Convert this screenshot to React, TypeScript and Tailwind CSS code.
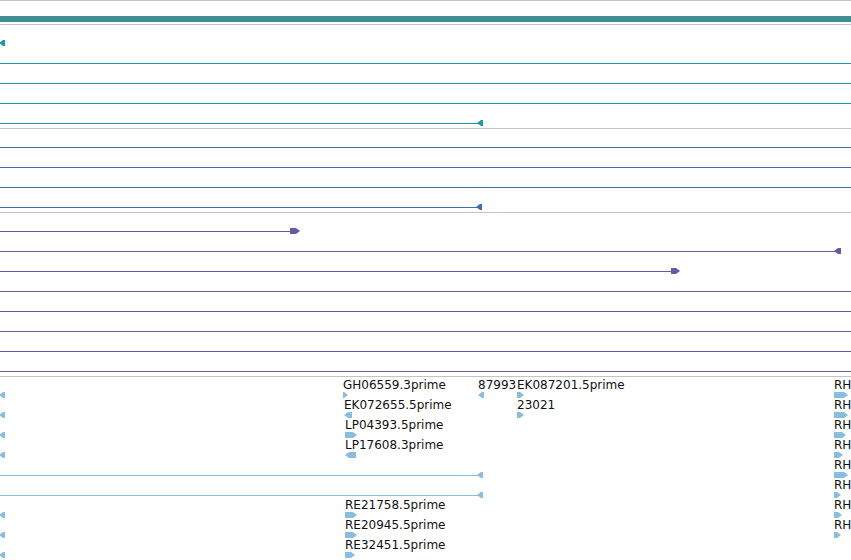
type Dir = "l" | "r";

type Glyph = { x: number; w: number; dir: Dir; label?: string };

type Row = { line?: number; glyphs?: Glyph[] };

type Track = { color: string; rows: Row[] };

const FULL = 851;

const full: Row = { line: FULL };

const tracks: Track[] = [
  {
    color: "#2096a8",
    rows: [
      { glyphs: [{ x: -1, w: 6, dir: "l" }] },
      full,
      full,
      full,
      { line: 480, glyphs: [{ x: 477, w: 6, dir: "l" }] },
    ],
  },
  {
    color: "#3d6db5",
    rows: [full, full, full, { line: 479, glyphs: [{ x: 476, w: 6, dir: "l" }] }],
  },
  {
    color: "#6a58a6",
    rows: [
      { line: 292, glyphs: [{ x: 290, w: 10, dir: "r" }] },
      { line: 836, glyphs: [{ x: 834, w: 7, dir: "l" }] },
      { line: 673, glyphs: [{ x: 671, w: 9, dir: "r" }] },
      full,
      full,
      full,
      full,
      full,
    ],
  },
  {
    color: "#88bde0",
    rows: [
      {
        glyphs: [
          { x: -1, w: 6, dir: "l" },
          { x: 343, w: 5, dir: "r", label: "GH06559.3prime" },
          { x: 478, w: 6, dir: "l", label: "87993" },
          { x: 517, w: 7, dir: "r", label: "EK087201.5prime" },
          { x: 834, w: 14, dir: "r", label: "RH" },
        ],
      },
      {
        glyphs: [
          { x: -1, w: 6, dir: "l" },
          { x: 344, w: 8, dir: "l", label: "EK072655.5prime" },
          { x: 517, w: 7, dir: "r", label: "23021" },
          { x: 834, w: 14, dir: "r", label: "RH" },
        ],
      },
      {
        glyphs: [
          { x: -1, w: 6, dir: "l" },
          { x: 345, w: 12, dir: "r", label: "LP04393.5prime" },
          { x: 834, w: 12, dir: "r", label: "RH" },
        ],
      },
      {
        glyphs: [
          { x: -1, w: 6, dir: "l" },
          { x: 345, w: 11, dir: "l", label: "LP17608.3prime" },
          { x: 834, w: 9, dir: "r", label: "RH" },
        ],
      },
      {
        line: 480,
        glyphs: [
          { x: 477, w: 6, dir: "l" },
          { x: 834, w: 14, dir: "r", label: "RH" },
        ],
      },
      {
        line: 480,
        glyphs: [
          { x: 477, w: 6, dir: "l" },
          { x: 834, w: 7, dir: "r", label: "RH" },
        ],
      },
      {
        glyphs: [
          { x: -1, w: 6, dir: "l" },
          { x: 345, w: 12, dir: "r", label: "RE21758.5prime" },
          { x: 834, w: 8, dir: "r", label: "RH" },
        ],
      },
      {
        glyphs: [
          { x: -1, w: 6, dir: "l" },
          { x: 345, w: 12, dir: "r", label: "RE20945.5prime" },
          { x: 834, w: 7, dir: "r", label: "RH" },
        ],
      },
      {
        glyphs: [
          { x: -1, w: 6, dir: "l" },
          { x: 345, w: 10, dir: "r", label: "RE32451.5prime" },
        ],
      },
    ],
  },
];

// body at full height, then a tapered tip
function arrowPoints(w: number, dir: Dir): string {
  const tip = Math.min(4, w - 1);
  const pts: [number, number][] = [
    [0, 0],
    [w - tip, 0],
    [w, 3],
    [w - tip, 6],
    [0, 6],
  ];
  return pts.map(([x, y]) => `${dir === "r" ? x : w - x},${y}`).join(" ");
}

function FeatureGlyph({ g, color }: { g: Glyph; color: string }) {
  return (
    <>
      {g.label && (
        <span
          className="absolute top-px whitespace-nowrap text-[12px] leading-[14px] text-[#111]"
          style={{ left: g.x }}
        >
          {g.label}
        </span>
      )}
      <svg
        className="absolute top-[15px]"
        style={{ left: g.x }}
        width={g.w}
        height={6}
        viewBox={`0 0 ${g.w} 6`}
        aria-hidden="true"
      >
        <polygon points={arrowPoints(g.w, g.dir)} fill={color} />
      </svg>
    </>
  );
}

function TrackView({ track }: { track: Track }) {
  return (
    <div className="pb-[3px]">
      {track.rows.map((row, i) => (
        <div key={i} className="relative h-5">
          {row.line !== undefined && (
            <div
              className="absolute left-0 top-[18px] h-px"
              style={{ width: row.line, backgroundColor: track.color }}
            />
          )}
          {row.glyphs?.map((g, j) => (
            <FeatureGlyph key={j} g={g} color={track.color} />
          ))}
        </div>
      ))}
    </div>
  );
}

export default function App() {
  return (
    <div
      className="h-[560px] w-[851px] overflow-hidden bg-white"
      style={{ fontFamily: '"DejaVu Sans", "Liberation Sans", sans-serif' }}
    >
      <div className="h-px bg-[#c4c4c4]" />
      <div className="mt-[15px] h-[6px] bg-[#3f8e92]" />
      <div className="mt-[2px] h-px bg-[#c4c4c4]" />
      {tracks.map((t, i) => (
        <div key={i}>
          <TrackView track={t} />
          <div className="h-px bg-[#c4c4c4]" />
        </div>
      ))}
    </div>
  );
}
